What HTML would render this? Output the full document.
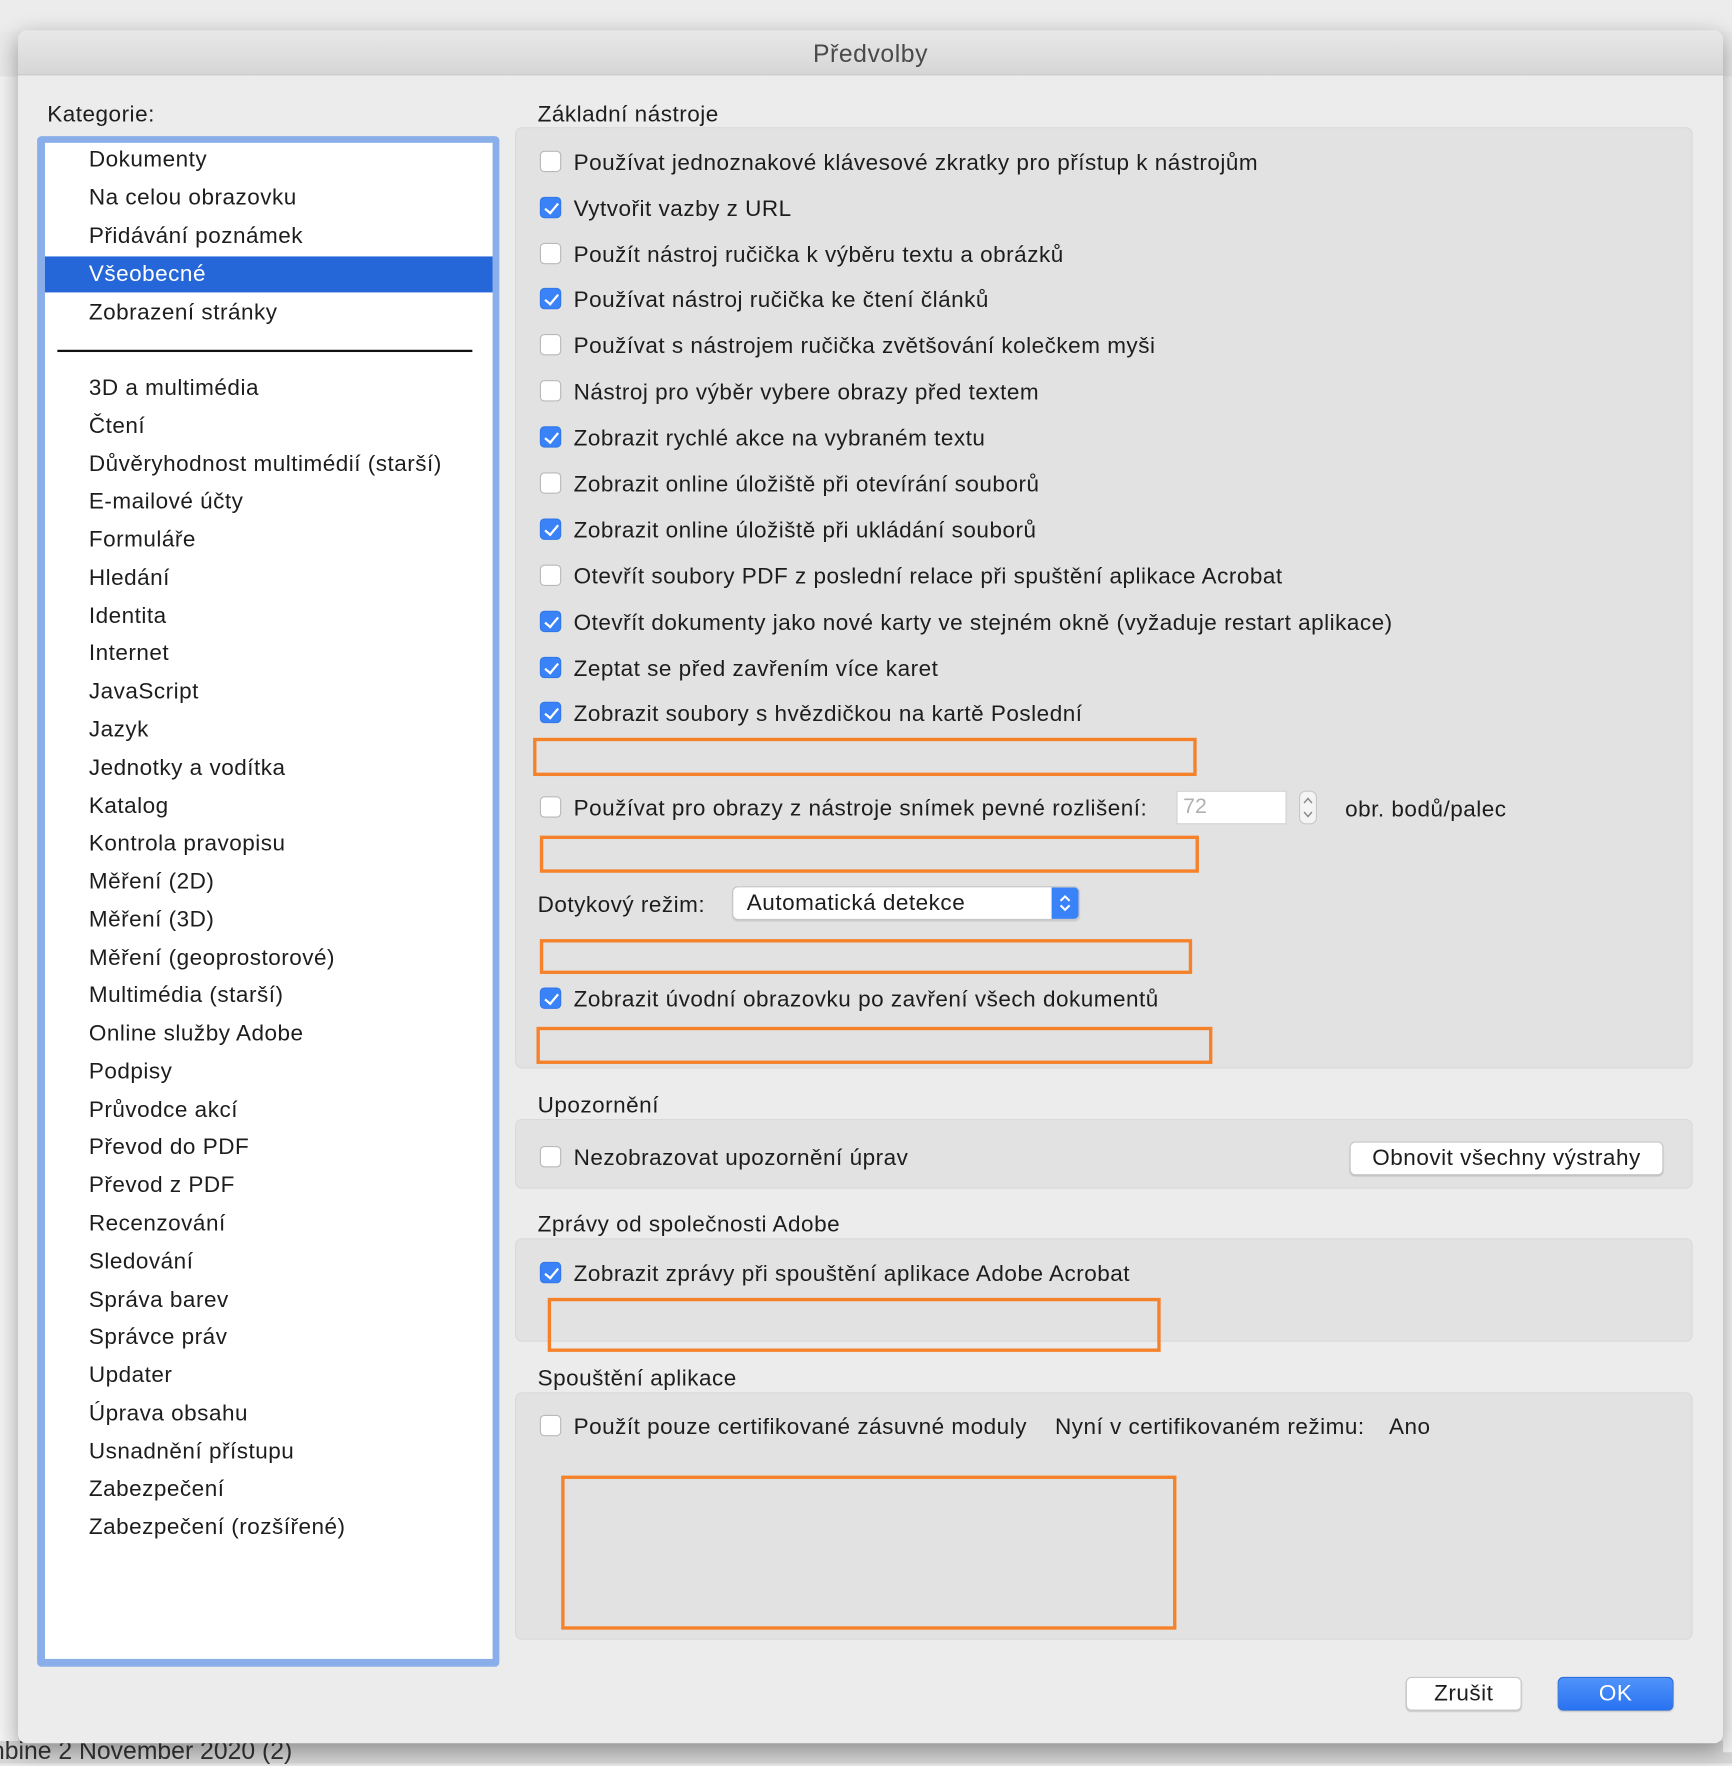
<!DOCTYPE html>
<html><head><meta charset="utf-8"><style>
html,body{margin:0;padding:0;width:1732px;height:1764px;overflow:hidden;background:#e9e9e9;}
#s{position:absolute;left:0;top:0;width:1540px;height:1568px;transform:scale(1.12468);transform-origin:0 0;font-family:"Liberation Sans",sans-serif;color:#1d1d1d;}
.a{position:absolute;white-space:nowrap;}
.t{position:absolute;white-space:nowrap;font-size:20px;line-height:24px;letter-spacing:0.45px;margin-top:1px;}
.cb{position:absolute;width:19px;height:19px;border-radius:4px;background:#fff;border:1px solid #b9b9b9;box-sizing:border-box;}
.cb.on{background:#3a82f7;border-color:#3278e8;}
.cb.on:after{content:"";position:absolute;left:6px;top:2px;width:5px;height:10px;border:solid #fff;border-width:0 2px 2px 0;transform:rotate(40deg);}
.ob{position:absolute;border:3px solid #f5822a;box-sizing:border-box;}
.grp{position:absolute;background:#e2e2e2;border:1px solid #d9d9d9;border-radius:6px;box-sizing:border-box;}
.btn{position:absolute;background:#fff;border:1px solid #c8c8c8;border-radius:5px;box-sizing:border-box;text-align:center;font-size:20px;line-height:28px;letter-spacing:0.45px;box-shadow:0 1px 1px rgba(0,0,0,.15);}
</style></head><body><div id="s">
<div class="a" style="left:0;top:0;width:1540px;height:28px;background:#ececec;"></div>
<div class="a" style="left:0;top:68px;width:16px;height:1490px;background:#f4f4f4;"></div>
<div class="a" style="left:0;top:1548px;width:1540px;height:20px;background:#d6d6d6;"></div>
<div class="a" style="left:-8px;top:1544px;font-size:22px;color:#333;">nbine 2 November 2020 (2)</div>
<div class="a" style="left:1532px;top:68px;width:8px;height:1490px;background:#f4f4f4;"></div>
<div class="a" style="left:16px;top:27px;width:1516px;height:1523px;background:#ececec;border-radius:8px;box-shadow:0 6px 20px rgba(0,0,0,.35);overflow:hidden;">
 <div class="a" style="left:0;top:0;width:1516px;height:39px;background:linear-gradient(#e8e8e8,#d6d6d6);border-bottom:1px solid #c4c4c4;"></div>
 <div class="a" style="left:0;top:8px;width:1516px;text-align:center;font-size:22px;color:#4a4a4a;letter-spacing:0.5px;">Předvolby</div>
</div>
<div class="t" style="left:42px;top:89px;">Kategorie:</div>
<div class="a" style="left:33px;top:121px;width:411px;height:1361px;background:#8aaeea;border-radius:4px;"></div>
<div class="a" style="left:40px;top:127px;width:398px;height:1348px;background:#fff;"></div>
<div class="a" style="left:40px;top:228px;width:398px;height:32px;background:#2566d8;"></div>
<div class="a" style="left:51px;top:311px;width:369px;height:2px;background:#111;"></div>
<div id="list"></div>
<div class="t" style="left:478px;top:89px;">Základní nástroje</div>
<div class="grp" style="left:458px;top:113px;width:1047px;height:837px;"></div>
<div class="t" style="left:478px;top:970px;">Upozornění</div>
<div class="grp" style="left:458px;top:995px;width:1047px;height:62px;"></div>
<div class="t" style="left:478px;top:1076px;">Zprávy od společnosti Adobe</div>
<div class="grp" style="left:458px;top:1101px;width:1047px;height:92px;"></div>
<div class="t" style="left:478px;top:1213px;">Spouštění aplikace</div>
<div class="grp" style="left:458px;top:1238px;width:1047px;height:220px;"></div>
<div id="rows"></div>
<div class="ob" style="left:474px;top:656px;width:590px;height:34px;"></div>
<div class="ob" style="left:480px;top:743px;width:586px;height:33px;"></div>
<div class="ob" style="left:480px;top:835px;width:580px;height:31px;"></div>
<div class="ob" style="left:477px;top:913px;width:601px;height:33px;"></div>
<div class="ob" style="left:487px;top:1154px;width:545px;height:48px;"></div>
<div class="ob" style="left:499px;top:1312px;width:547px;height:137px;"></div>
<div class="a" style="left:1046px;top:703px;width:98px;height:30px;background:#fff;border:1px solid #cfcfcf;box-sizing:border-box;font-size:19px;line-height:28px;color:#b0b0b0;padding-left:5px;">72</div>
<div class="a" style="left:1155px;top:703px;width:16px;height:30px;background:#f4f4f4;border:1px solid #c8c8c8;border-radius:6px;box-sizing:border-box;"></div>
<svg class="a" style="left:1155px;top:703px;" width="16" height="30" viewBox="0 0 16 30"><path d="M4.5 11 L8 7 L11.5 11 M4.5 19 L8 23 L11.5 19" fill="none" stroke="#888" stroke-width="1.3"/></svg>
<div class="t" style="left:1196px;top:707px;">obr. bodů/palec</div>
<div class="t" style="left:478px;top:792px;">Dotykový režim:</div>
<div class="a" style="left:651px;top:788px;width:309px;height:30px;background:#fff;border:1px solid #c6c6c6;border-radius:5px;box-sizing:border-box;box-shadow:0 1px 1px rgba(0,0,0,.1);overflow:hidden;">
 <div class="a" style="left:12px;top:3px;font-size:20px;letter-spacing:0.45px;">Automatická detekce</div>
 <div class="a" style="right:0;top:0;width:24px;height:30px;background:#3a82f7;"></div>
 <svg class="a" style="right:5px;top:5px;" width="14" height="18" viewBox="0 0 14 18"><path d="M3 7 L7 3 L11 7 M3 11 L7 15 L11 11" fill="none" stroke="#fff" stroke-width="1.8"/></svg>
</div>
<div class="btn" style="left:1200px;top:1015px;width:279px;height:30px;">Obnovit všechny výstrahy</div>
<div class="t" style="left:938px;top:1256px;">Nyní v certifikovaném režimu:</div>
<div class="t" style="left:1235px;top:1256px;">Ano</div>
<div class="btn" style="left:1250px;top:1491px;width:103px;height:30px;">Zrušit</div>
<div class="btn" style="left:1385px;top:1491px;width:103px;height:30px;background:linear-gradient(#4f93fa,#2a73f2);border-color:#2a6de0;color:#fff;">OK</div>
</div>
<script>
var L=["Dokumenty","Na celou obrazovku","Přidávání poznámek","Všeobecné","Zobrazení stránky"],h="";
L.forEach(function(t,i){h+='<div class="t" style="left:79px;top:'+(129+i*34)+'px;'+(i==3?'color:#fff;':'')+'">'+t+'</div>';});
var M=["3D a multimédia","Čtení","Důvěryhodnost multimédií (starší)","E-mailové účty","Formuláře","Hledání","Identita","Internet","JavaScript","Jazyk","Jednotky a vodítka","Katalog","Kontrola pravopisu","Měření (2D)","Měření (3D)","Měření (geoprostorové)","Multimédia (starší)","Online služby Adobe","Podpisy","Průvodce akcí","Převod do PDF","Převod z PDF","Recenzování","Sledování","Správa barev","Správce práv","Updater","Úprava obsahu","Usnadnění přístupu","Zabezpečení","Zabezpečení (rozšířené)"];
M.forEach(function(t,i){h+='<div class="t" style="left:79px;top:'+(332+i*33.77).toFixed(1)+'px;">'+t+'</div>';});
document.getElementById("list").outerHTML=h;
var R=[[144,0,"Používat jednoznakové klávesové zkratky pro přístup k nástrojům"],[185,1,"Vytvořit vazby z URL"],[226,0,"Použít nástroj ručička k výběru textu a obrázků"],[266,1,"Používat nástroj ručička ke čtení článků"],[307,0,"Používat s nástrojem ručička zvětšování kolečkem myši"],[348,0,"Nástroj pro výběr vybere obrazy před textem"],[389,1,"Zobrazit rychlé akce na vybraném textu"],[430,0,"Zobrazit online úložiště při otevírání souborů"],[471,1,"Zobrazit online úložiště při ukládání souborů"],[512,0,"Otevřít soubory PDF z poslední relace při spuštění aplikace Acrobat"],[553,1,"Otevřít dokumenty jako nové karty ve stejném okně (vyžaduje restart aplikace)"],[594,1,"Zeptat se před zavřením více karet"],[634,1,"Zobrazit soubory s hvězdičkou na kartě Poslední"],[718,0,"Používat pro obrazy z nástroje snímek pevné rozlišení:"],[888,1,"Zobrazit úvodní obrazovku po zavření všech dokumentů"],[1029,0,"Nezobrazovat upozornění úprav"],[1132,1,"Zobrazit zprávy při spouštění aplikace Adobe Acrobat"],[1268,0,"Použít pouze certifikované zásuvné moduly"]];
h="";R.forEach(function(r){h+='<div class="cb'+(r[1]?' on':'')+'" style="left:480px;top:'+(r[0]-10)+'px;"></div><div class="t" style="left:510px;top:'+(r[0]-12)+'px;">'+r[2]+'</div>';});
document.getElementById("rows").outerHTML=h;
</script>
</body></html>
